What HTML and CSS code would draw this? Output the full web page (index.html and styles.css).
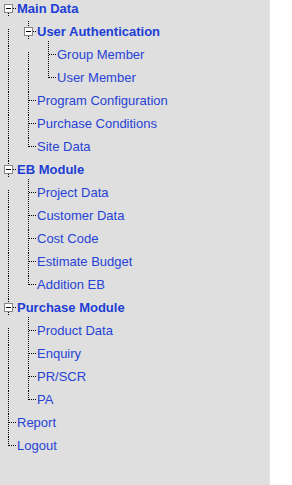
FILE: index.html
```html
<!DOCTYPE html>
<html lang="en">
<head>
    <meta charset="UTF-8">
    <title>Menu</title>
    <link rel="stylesheet" href="styles.css">
</head>
<body>
    <div class="panel">
        <div class="tree">
            <div class="row"><span class="cell toggle root"><span class="box"><span class="minus"></span></span></span><a class="node head" href="#">Main Data</a></div>
            <div class="row"><span class="cell line late"></span><span class="cell toggle lead"><span class="box"><span class="minus"></span></span></span><a class="node head" href="#">User Authentication</a></div>
            <div class="row"><span class="cell line"></span><span class="cell line late"></span><span class="cell join lead"></span><a class="node" href="#">Group Member</a></div>
            <div class="row"><span class="cell line"></span><span class="cell line"></span><span class="cell end"></span><a class="node" href="#">User Member</a></div>
            <div class="row"><span class="cell line"></span><span class="cell join"></span><a class="node" href="#">Program Configuration</a></div>
            <div class="row"><span class="cell line"></span><span class="cell join"></span><a class="node" href="#">Purchase Conditions</a></div>
            <div class="row"><span class="cell line"></span><span class="cell end"></span><a class="node" href="#">Site Data</a></div>
            <div class="row"><span class="cell toggle"><span class="box"><span class="minus"></span></span></span><a class="node head" href="#">EB Module</a></div>
            <div class="row"><span class="cell line late"></span><span class="cell join lead"></span><a class="node" href="#">Project Data</a></div>
            <div class="row"><span class="cell line"></span><span class="cell join"></span><a class="node" href="#">Customer Data</a></div>
            <div class="row"><span class="cell line"></span><span class="cell join"></span><a class="node" href="#">Cost Code</a></div>
            <div class="row"><span class="cell line"></span><span class="cell join"></span><a class="node" href="#">Estimate Budget</a></div>
            <div class="row"><span class="cell line"></span><span class="cell end"></span><a class="node" href="#">Addition EB</a></div>
            <div class="row"><span class="cell toggle"><span class="box"><span class="minus"></span></span></span><a class="node head" href="#">Purchase Module</a></div>
            <div class="row"><span class="cell line late"></span><span class="cell join lead"></span><a class="node" href="#">Product Data</a></div>
            <div class="row"><span class="cell line"></span><span class="cell join"></span><a class="node" href="#">Enquiry</a></div>
            <div class="row"><span class="cell line"></span><span class="cell join"></span><a class="node" href="#">PR/SCR</a></div>
            <div class="row"><span class="cell line"></span><span class="cell end"></span><a class="node" href="#">PA</a></div>
            <div class="row"><span class="cell join"></span><a class="node" href="#">Report</a></div>
            <div class="row"><span class="cell end"></span><a class="node" href="#">Logout</a></div>
        </div>
    </div>
</body>
</html>
```

FILE: styles.css
```css
:root {
    --vdot: repeating-linear-gradient(to bottom, #000 0 1px, transparent 1px 2px);
    --hdot: repeating-linear-gradient(to right, #000 0 1px, transparent 1px 2px);
}
body {
    margin: 0;
    background: #fff;
    font-family: 'Liberation Sans', Arial, sans-serif;
}
.panel {
    width: 270px;
    min-height: 100vh;
    background: #dfdfdf;
    border-right: 1px solid #e6e6e6;
    box-sizing: border-box;
}
.row { display: flex; align-items: flex-start; height: 23px; }
.cell { flex: none; width: 20px; height: 23px; box-sizing: border-box; }

/* tree lines */
.cell.line { background: var(--vdot) 8px 0 / 1px 100% no-repeat; }
.cell.line.late { background: var(--vdot) 8px 6px / 1px 17px no-repeat; }
.cell.join {
    width: 17px;
    background: var(--vdot) 8px 0 / 1px 100% no-repeat, var(--hdot) 9px 8px / 8px 1px no-repeat;
}
.cell.join.lead {
    margin-top: -5px;
    height: 28px;
    background: var(--vdot) 8px 0 / 1px 100% no-repeat, var(--hdot) 9px 13px / 8px 1px no-repeat;
}
.cell.end {
    width: 17px;
    background: var(--vdot) 8px 0 / 1px 9px no-repeat, var(--hdot) 9px 8px / 8px 1px no-repeat;
}

/* expand / collapse box */
.cell.toggle {
    width: 17px;
    padding: 4px 0 0 4px;
    background: var(--vdot) 8px 0 / 1px 4px no-repeat, var(--vdot) 8px 13px / 1px 4px no-repeat, var(--hdot) 13px 8px / 4px 1px no-repeat;
}
.cell.toggle.root {
    background: var(--vdot) 8px 13px / 1px 4px no-repeat, var(--hdot) 13px 8px / 4px 1px no-repeat;
}
.cell.toggle.lead {
    margin-top: -2px;
    height: 25px;
    padding-top: 6px;
    background: var(--vdot) 8px 0 / 1px 6px no-repeat, var(--vdot) 8px 15px / 1px 4px no-repeat, var(--hdot) 13px 10px / 4px 1px no-repeat;
}
.box {
    display: flex;
    align-items: center;
    justify-content: center;
    width: 9px;
    height: 9px;
    box-sizing: border-box;
    border: 1px solid #848484;
    background: #fff;
}
.minus { width: 5px; height: 1px; background: #000; }

.node {
    font-size: 13px;
    line-height: 17px;
    color: #2743d6;
    text-decoration: none;
    white-space: nowrap;
}
.node.head { font-weight: bold; color: #1c3ed4; }
```
